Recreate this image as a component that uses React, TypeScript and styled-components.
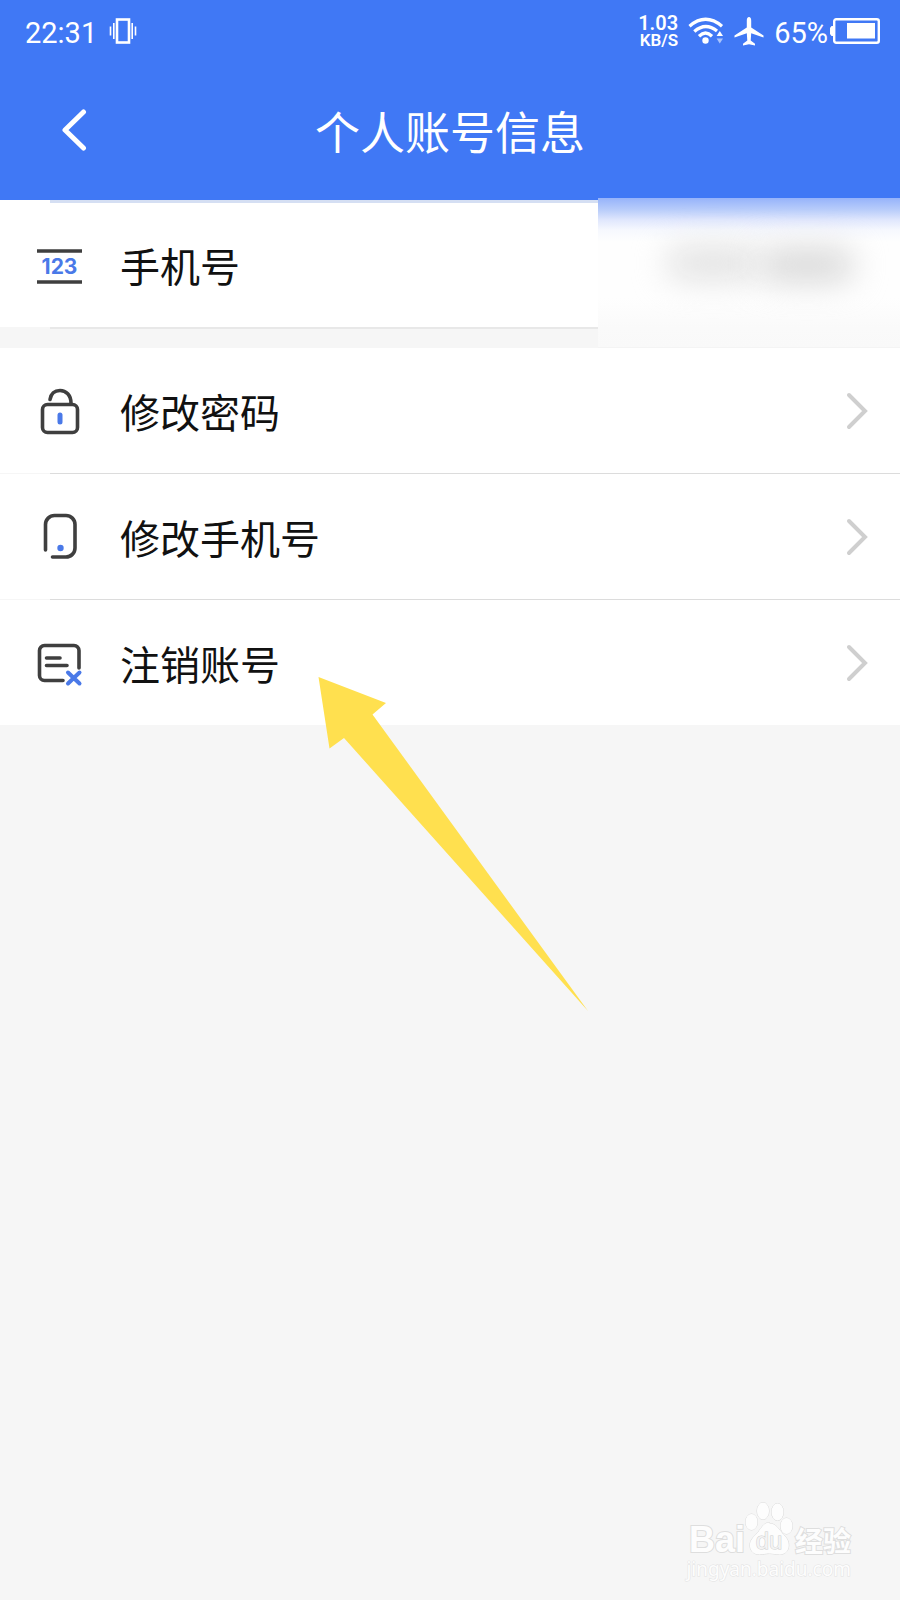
import React from 'react';
import styled, { createGlobalStyle } from 'styled-components';

const GlobalStyle = createGlobalStyle`
  *, *::before, *::after { box-sizing: border-box; }
  body { margin: 0; background: #f6f6f6; }
`;

const uiFont = `Roboto, 'Noto Sans CJK SC', sans-serif`;
const hanFont = `'Noto Sans CJK SC', sans-serif`;

const Page = styled.div`
  position: relative;
  display: flex;
  flex-direction: column;
  min-height: 100vh;
  overflow: hidden;
  background: #f6f6f6;
  color: #111;
  font-family: ${uiFont};
`;

const TopArea = styled.header`
  background: #4078f5;
  color: #fff;
`;

const StatusBar = styled.div`
  display: flex;
  align-items: center;
  justify-content: space-between;
  height: 62px;
  padding: 0 20px 0 25px;
`;

const StatusGroup = styled.div<{ $gap: number }>`
  display: flex;
  align-items: center;
  gap: ${({ $gap }) => $gap}px;
`;

const StatusText = styled.span`
  font-size: 29px;
  line-height: 32px;
  padding-top: 4px;
`;

const Speed = styled.div`
  display: flex;
  flex-direction: column;
  align-items: flex-end;
  padding-top: 2px;
  font-weight: 600;
`;

const SpeedLine = styled.span<{ $size: number }>`
  font-size: ${({ $size }) => $size}px;
  line-height: 17px;
`;

const TitleBar = styled.div`
  display: grid;
  grid-template-columns: 120px 1fr 120px;
  align-items: center;
  height: 138px;
`;

const BackButton = styled.button`
  display: flex;
  justify-content: center;
  padding: 0 0 2px 28px;
  border: 0;
  background: none;
  color: inherit;
  cursor: pointer;
`;

const Title = styled.h1`
  margin: 0;
  font-family: ${hanFont};
  font-size: 45px;
  font-weight: 400;
  line-height: 64px;
  text-align: center;
`;

const Section = styled.section`
  position: relative;
  margin-bottom: 19px;
`;

const Divider = styled.div<{ $height?: number; $tone?: string }>`
  height: ${({ $height = 1 }) => $height}px;
  margin-left: 50px;
  background: ${({ $tone = '#dcdcdc' }) => $tone};
`;

const White = styled.div`
  background: #fff;
`;

const Row = styled.div<{ $height?: number }>`
  display: flex;
  align-items: center;
  gap: 36px;
  width: 100%;
  height: ${({ $height = 125 }) => $height}px;
  padding: 0 31px 0 36px;
  border: 0;
  background: #fff;
  color: inherit;
  font-family: inherit;
  text-align: left;
`;

const Label = styled.span`
  flex: 1;
  font-family: ${hanFont};
  font-size: 40px;
  line-height: 56px;
`;

const Menu = styled.ul`
  position: relative;
  margin: 0;
  padding: 0;
  list-style: none;
`;

const MenuItem = styled.li`
  position: relative;
`;

const Mask = styled.div`
  position: absolute;
  top: -2px;
  right: 0;
  bottom: -19px;
  width: 302px;
  overflow: hidden;
  border-bottom: 1px solid #f4f4f4;
  background: linear-gradient(
    #96b3fa 0,
    #b9cdfa 12px,
    #e0e7fd 22px,
    #f6f8fe 32px,
    #fefefe 44px,
    #fefefe 100px,
    #fafafa 130px,
    #f9f9f9 100%
  );
`;

const Smudge = styled.span<{ $left: number; $top: number; $width: number; $tone: string }>`
  position: absolute;
  left: ${({ $left }) => $left}px;
  top: ${({ $top }) => $top}px;
  width: ${({ $width }) => $width}px;
  height: 34px;
  border-radius: 17px;
  background: ${({ $tone }) => $tone};
  filter: blur(16px);
`;

const Pointer = styled.svg`
  position: absolute;
  top: 77px;
  left: 318px;
  z-index: 1;
  pointer-events: none;
`;

const Watermark = styled.div`
  position: absolute;
  right: 49px;
  bottom: 18px;
  display: flex;
  flex-direction: column;
  align-items: flex-end;
  color: #fdfdfd;
  -webkit-text-stroke: 2px #dedede;
  paint-order: stroke fill;
`;

const Brand = styled.div`
  display: flex;
  align-items: flex-end;
`;

const BrandLatin = styled.span`
  font: 700 36px/32px 'Liberation Sans', sans-serif;
`;

const BrandHan = styled.span`
  font: 700 28px/32px ${hanFont};
`;

const Site = styled.span`
  font: 400 19px/26px 'Noto Sans', sans-serif;
  -webkit-text-stroke: 1px #e2e2e2;
`;

const PawText = styled.text`
  font: 400 24px 'Liberation Sans', sans-serif;
  -webkit-text-stroke: 0;
`;

const VibrateIcon = () => (
  <svg width="28" height="26" viewBox="0 0 28 26" fill="none" stroke="#fff" aria-hidden="true">
    <rect x="8" y="1.5" width="12" height="23" strokeWidth="2.6" />
    <path d="M4.8 5v16M23.2 5v16M1.5 8.5v9M26.5 8.5v9" strokeWidth="1.6" />
  </svg>
);

const WifiIcon = () => (
  <svg width="36" height="28" viewBox="0 0 36 28" fill="none" stroke="#fff" aria-hidden="true">
    <path d="M1.5 9.2Q17.5 -4.6 34 9.2" strokeWidth="3.3" />
    <path d="M6.3 14.5Q17.5 4.6 29 14" strokeWidth="3.3" />
    <path d="M11 19.2Q17.5 13 24 19.2" strokeWidth="3.3" />
    <circle cx="17.5" cy="23.5" r="3.2" fill="#fff" stroke="none" />
    <path d="M31.8 14l3.2 5h-6.4z" fill="#fff" stroke="none" />
    <path d="M31.8 26.5l3.2-5h-6.4z" fill="#a9c3fb" stroke="none" />
  </svg>
);

const PlaneIcon = () => (
  <svg width="30" height="29" viewBox="0 0 30 29" fill="#fff" aria-hidden="true">
    <path d="M15 0c1.4 0 2.2 1.5 2.2 3.5v7L29.500 18.500v2l-12.300-4.200-.5 7.300 4.300 3.200V28.500L15 27.200 9 28.500v-1.700l4.300-3.200-.5-7.300L.5 20.500v-2l12.300-8v-7C12.800 1.500 13.600 0 15 0z" />
  </svg>
);

const BatteryIcon = () => (
  <svg width="50" height="26" viewBox="0 0 50 26" fill="none" aria-hidden="true">
    <rect x="4.2" y="1.2" width="44.6" height="23.6" rx="2" stroke="#fff" strokeWidth="2.4" />
    <path d="M3.5 8H1.500L0 10v6l1.500 2h2z" fill="#fff" />
    <rect x="17" y="5" width="28" height="15.5" fill="#fff" />
  </svg>
);

const BackIcon = () => (
  <svg width="26" height="42" viewBox="0 0 26 42" fill="none" stroke="#fff" aria-hidden="true">
    <path d="M22.5 3L4 21l18.500 18" strokeWidth="5" strokeLinecap="round" strokeLinejoin="round" />
  </svg>
);

const ForwardIcon = () => (
  <svg width="24" height="38" viewBox="0 0 24 38" fill="none" stroke="#cfcfcf" aria-hidden="true">
    <path d="M4 3l16 16L4 35" strokeWidth="4" strokeLinecap="round" />
  </svg>
);

const RowIcon = ({ children }: { children: React.ReactNode }) => (
  <svg width="48" height="48" viewBox="0 0 48 48" fill="none" stroke="#3f3f3f" strokeWidth="3.6" strokeLinecap="round" aria-hidden="true">
    {children}
  </svg>
);

const NumberIcon = () => (
  <RowIcon>
    <path d="M1 10h45M1 41h45" strokeLinecap="butt" />
    <text x="23.5" y="33" textAnchor="middle" fill="#4a79e8" stroke="none" fontFamily="Inter, sans-serif" fontWeight="700" fontSize="21">
      123
    </text>
  </RowIcon>
);

const LockIcon = () => (
  <RowIcon>
    <rect x="6.500" y="17.500" width="35" height="28" rx="5" />
    <path d="M14 12.500C15 6.500 19 3.500 24 3.500c6 0 11 4.500 11 12.700" />
    <path d="M24 28v7" stroke="#4a79e8" strokeWidth="5" />
  </RowIcon>
);

const PhoneIcon = () => (
  <RowIcon>
    <path d="M9.5 37V11.500a9 9 0 0 1 9-9H30a9 9 0 0 1 9 9V35a9 9 0 0 1-9 9H16.500" />
    <circle cx="24.500" cy="35" r="3.2" fill="#4a79e8" stroke="none" />
  </RowIcon>
);

const CloseAccountIcon = () => (
  <RowIcon>
    <path d="M27 41.500H8.500a5 5 0 0 1-5-5V11.500a5 5 0 0 1 5-5h29.500a5 5 0 0 1 5 5v17.500" />
    <path d="M10.500 19h13.500M10.500 26.500h20.500" />
    <path d="M32 33.500l11.500 11M43.500 33.500L32 44.500" stroke="#4a79e8" strokeWidth="4" />
  </RowIcon>
);

const Paw = () => (
  <svg width="50" height="54" viewBox="0 0 50 54" fill="#fdfdfd" stroke="#dadada" aria-hidden="true">
    <ellipse cx="6.500" cy="20" rx="6" ry="8" />
    <ellipse cx="18" cy="9" rx="6" ry="8.500" />
    <ellipse cx="32.500" cy="10" rx="6" ry="8.500" />
    <ellipse cx="41.500" cy="24" rx="6" ry="8" />
    <path d="M24.500 21.500c7 0 9 6 14 11 4 4 6 8 5 13-1 5-5 7-9 7-4 0-6-1-10-1s-6 1-10 1c-5 0-9-3-9.500-8-.5-5 2-8 6-12 5-5 7-12 13.500-12z" />
    <PawText x="24" y="47" textAnchor="middle" fill="#f3f3f3" stroke="#cfcfcf">
      du
    </PawText>
  </svg>
);

const actions = [
  { label: '修改密码', Icon: LockIcon },
  { label: '修改手机号', Icon: PhoneIcon },
  { label: '注销账号', Icon: CloseAccountIcon },
];

export default function App() {
  return (
    <Page>
      <GlobalStyle />
      <TopArea>
        <StatusBar>
          <StatusGroup $gap={12}>
            <StatusText>22:31</StatusText>
            <VibrateIcon />
          </StatusGroup>
          <StatusGroup $gap={10}>
            <Speed>
              <SpeedLine $size={20}>1.03</SpeedLine>
              <SpeedLine $size={17}>KB/S</SpeedLine>
            </Speed>
            <WifiIcon />
            <PlaneIcon />
            <StatusGroup $gap={2}>
              <StatusText>65%</StatusText>
              <BatteryIcon />
            </StatusGroup>
          </StatusGroup>
        </StatusBar>
        <TitleBar>
          <BackButton type="button" aria-label="返回">
            <BackIcon />
          </BackButton>
          <Title>个人账号信息</Title>
        </TitleBar>
      </TopArea>

      <main>
        <Section>
          <White>
            <Divider $height={3} $tone="#d5dff3" />
            <Row $height={124}>
              <NumberIcon />
              <Label>手机号</Label>
            </Row>
          </White>
          <Divider $height={2} $tone="#e8e8e8" />
          <Mask>
            <Smudge $left={68} $top={48} $width={94} $tone="#e2e2e2" />
            <Smudge $left={162} $top={50} $width={94} $tone="#d8d8d8" />
          </Mask>
        </Section>

        <Menu>
          {actions.map(({ label, Icon }, index) => (
            <MenuItem key={label}>
              <Row as="button">
                <Icon />
                <Label>{label}</Label>
                <ForwardIcon />
              </Row>
              {index < actions.length - 1 ? (
                <Divider />
              ) : (
                <Pointer width="272" height="336" viewBox="0 0 272 336" fill="#ffe04f" aria-hidden="true">
                  <path d="M.5 0L68 26 54.500 37.500 270 334 26 61 11.500 71.500z" />
                </Pointer>
              )}
            </MenuItem>
          ))}
        </Menu>
      </main>

      <Watermark>
        <Brand>
          <BrandLatin>Bai</BrandLatin>
          <Paw />
          <BrandHan>经验</BrandHan>
        </Brand>
        <Site>jingyan.baidu.com</Site>
      </Watermark>
    </Page>
  );
}
